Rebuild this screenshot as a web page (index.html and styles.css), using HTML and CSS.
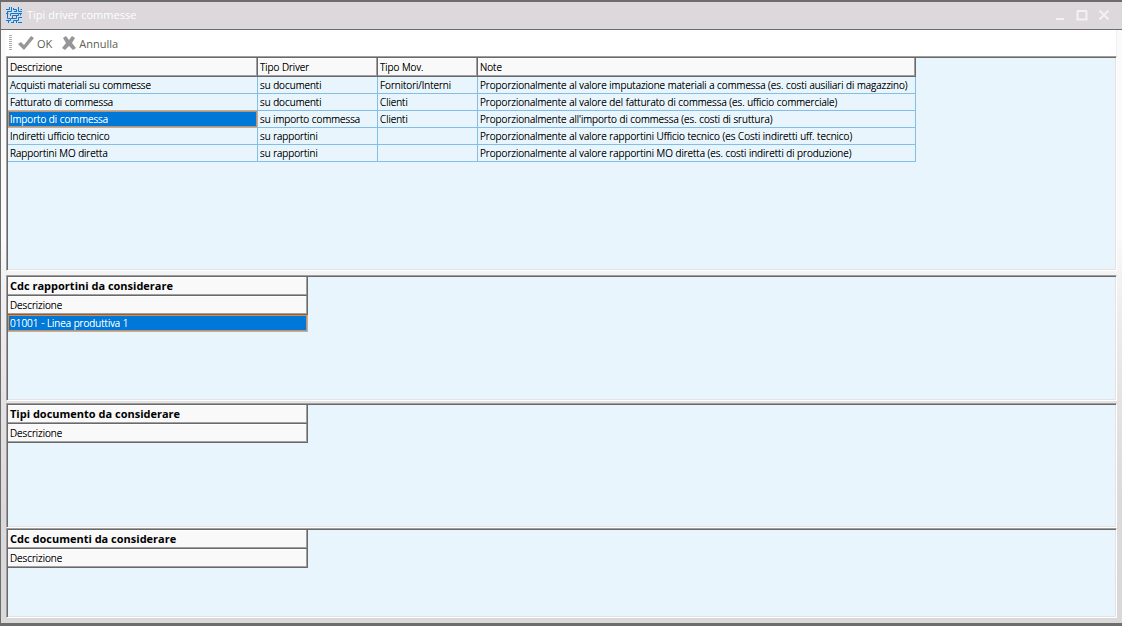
FILE: index.html
```html
<!DOCTYPE html>
<html lang="it">
<head>
<meta charset="utf-8">
<title>Tipi driver commesse</title>
<link rel="stylesheet" href="styles.css">
</head>
<body>
<div class="window">
  <header class="titlebar">
    <svg class="logo" viewBox="0 0 16 16" aria-hidden="true"><path d="M0 2.500H3.500V0M5.500 0V4.500H1M7.500 1V3M7.500 2.500H10.500V5M12.500 0V4.500H16M14.500 2.500H16M0 6.500H2.500M1.500 4.500V11.500H4M4.500 9V6.500H12.500V8.500H6.500V11.500M14.500 6V8.500M12.500 6.500H16M8 4.500H10.500M0 13.500H4.500V11.500H10.500V8.500M12.500 10.500H16M12.500 10.500V13.500H7.500V16M2.500 16V13.500M5 15.500H7.500M10.500 16V13.500M12 15.500H16"/></svg>
    <h1 class="title">Tipi driver commesse</h1>
    <div class="controls">
      <button class="control" type="button" aria-label="Riduci a icona"><svg viewBox="0 0 12 12"><path d="M2 10H10"/></svg></button>
      <button class="control" type="button" aria-label="Ingrandisci"><svg viewBox="0 0 12 12"><path d="M1 2H11M1.500 2V10.500H10.500V2"/></svg></button>
      <button class="control" type="button" aria-label="Chiudi"><svg viewBox="0 0 12 12"><path d="M1.500 1.500L10.500 10.500M10.500 1.500L1.500 10.500"/></svg></button>
    </div>
  </header>
  <main class="body">
    <div class="toolbar">
      <span class="grip"></span>
      <button class="tool" type="button"><svg viewBox="0 0 17 16"><path d="M1 9L4 7L7 10L14 1L17 3L7 15Z"/></svg>OK</button>
      <button class="tool" type="button"><svg class="cross" viewBox="0 0 14 14"><path d="M1 2L4 0L7 4L10 0L13 2L10 7L14 12L11 14L7 10L3 14L0 12L4 7Z"/></svg>Annulla</button>
    </div>
    <section class="panel drivers">
      <table class="grid">
        <colgroup><col class="col-name"><col class="col-driver"><col class="col-mov"><col class="col-note"></colgroup>
        <thead><tr><th>Descrizione</th><th>Tipo Driver</th><th>Tipo Mov.</th><th>Note</th></tr></thead>
        <tbody>
          <tr><td>Acquisti materiali su commesse</td><td>su documenti</td><td>Fornitori/Interni</td><td>Proporzionalmente al valore imputazione materiali a commessa (es. costi ausiliari di magazzino)</td></tr>
          <tr><td>Fatturato di commessa</td><td>su documenti</td><td>Clienti</td><td>Proporzionalmente al valore del fatturato di commessa (es. ufficio commerciale)</td></tr>
          <tr><td class="selected">Importo di commessa</td><td>su importo commessa</td><td>Clienti</td><td>Proporzionalmente all'importo di commessa (es. costi di sruttura)</td></tr>
          <tr><td>Indiretti ufficio tecnico</td><td>su rapportini</td><td></td><td>Proporzionalmente al valore rapportini Ufficio tecnico (es Costi indiretti uff. tecnico)</td></tr>
          <tr><td>Rapportini MO diretta</td><td>su rapportini</td><td></td><td>Proporzionalmente al valore rapportini MO diretta (es. costi indiretti di produzione)</td></tr>
        </tbody>
      </table>
    </section>
    <section class="panel reports">
      <table class="grid single">
        <thead><tr><th class="caption">Cdc rapportini da considerare</th></tr><tr><th>Descrizione</th></tr></thead>
        <tbody><tr><td class="selected">01001 - Linea produttiva 1</td></tr></tbody>
      </table>
    </section>
    <section class="panel types">
      <table class="grid single">
        <thead><tr><th class="caption">Tipi documento da considerare</th></tr><tr><th>Descrizione</th></tr></thead>
      </table>
    </section>
    <section class="panel documents">
      <table class="grid single">
        <thead><tr><th class="caption">Cdc documenti da considerare</th></tr><tr><th>Descrizione</th></tr></thead>
      </table>
    </section>
  </main>
</div>
</body>
</html>
```
FILE: styles.css
```css
* { box-sizing: border-box; }
body { margin: 0; font-family: "Open Sans", "Noto Sans", sans-serif; font-size: 10px; color: #000; }
button { font: inherit; border: 0; padding: 0; background: none; }

.window {
  display: flex;
  flex-direction: column;
  min-height: 100vh;
  border: solid #6d6d6d;
  border-width: 2px 0 3px 1px;
}

.titlebar {
  display: flex;
  align-items: center;
  gap: 5px;
  height: 28px;
  padding: 0 12px 2px 5px;
  background: #dcd8dc;
  border-bottom: 1px solid #6d6d6d;
}
.logo { width: 16px; height: 16px; fill: none; stroke: #0a7ad8; stroke-width: 1; }
.title { flex: 1; margin: 0; font-size: 11px; font-weight: 400; color: #fff; }
.controls { display: flex; gap: 10px; }
.control { display: flex; }
.control svg { width: 12px; height: 12px; fill: none; stroke: #f3f1f3; stroke-width: 2; }

.body {
  flex: 1;
  display: flex;
  flex-direction: column;
  padding: 0 5px 5px;
  background: linear-gradient(#fafafa 0, #fafafa 35%, #efedef 47%, #e4e1e3 65%, #dcd9dc 80%, #d9d9d9 100%);
}

.toolbar {
  display: flex;
  align-items: center;
  gap: 10px;
  height: 26px;
  padding: 0 3px;
  background: #fff;
  font-size: 11px;
  border-right: 1px solid #f0f0f0;
}
.grip { width: 3px; height: 16px; margin-right: -5px; background: repeating-linear-gradient(#aaa 0 1px, #fff 1px 2px); }
.tool { display: flex; align-items: center; gap: 3px; color: #5c6150; }
.tool svg { width: 17px; height: 16px; fill: #969696; }
.tool .cross { width: 14px; height: 14px; }

.panel {
  flex-basis: 0;
  background: #e9f5fc;
  border: 1px solid;
  border-color: #a0a0a0 #fff #fff #a0a0a0;
  box-shadow: inset 1px 1px #696969, inset -1px -1px #e3e3e3;
  padding: 1px;
}
.drivers { flex-grow: 211; margin-bottom: 4px; }
.reports { flex-grow: 122; margin-bottom: 2px; }
.types { flex-grow: 121; }
.documents { flex-grow: 86; }

.grid { border-collapse: separate; border-spacing: 0; table-layout: fixed; width: 908px; }
.single { width: 300px; }
.col-name { width: 250px; }
.col-driver { width: 120px; }
.col-mov { width: 100px; }
.col-note { width: 438px; }

th, td {
  padding: 0 2px;
  line-height: 16px;
  font-weight: 300;
  text-align: left;
  white-space: nowrap;
  text-shadow: 0 0 currentColor;
}
th {
  height: 19px;
  background: #f9f9f9;
  border: solid #696969;
  border-width: 0 1px 1px 0;
  box-shadow: inset -1px -1px #a0a0a0, inset 0 1px #fff;
}
td {
  height: 17px;
  border: solid #84bde6;
  border-width: 0 1px 1px 0;
}
.caption { font-size: 11px; font-weight: 700; text-shadow: none; }
.selected { background: #0078d7; color: #fff; box-shadow: inset 0 0 0 1px #f5842b; }
```
